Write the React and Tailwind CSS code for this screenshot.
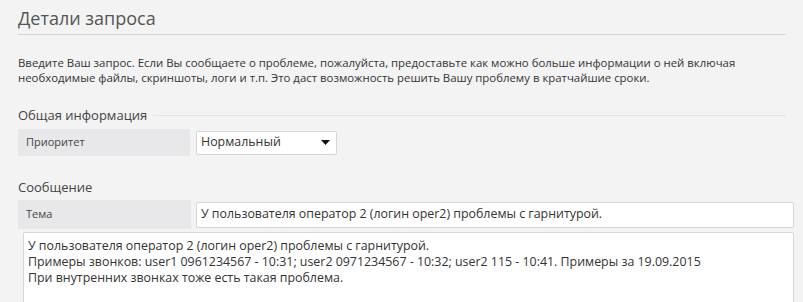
export default function App() {
  return (
    <div
      className="w-[803px] h-[302px] overflow-hidden bg-[#f3f3f3] text-[#333]"
      style={{ fontFamily: '"Open Sans", "Noto Sans", sans-serif' }}
    >
      <div className="pl-[18px] pr-[17px] pt-[5px]">
        <h1 className="text-[18px] leading-[26px] text-[#555] pb-[3px] border-b border-[#d4d4d4]">
          Детали запроса
        </h1>
        <p className="mt-[20px] text-[11.4px] leading-[15px] text-[#333]">
          Введите Ваш запрос. Если Вы сообщаете о проблеме, пожалуйста, предоставьте как можно больше информации о ней включая необходимые файлы, скриншоты, логи и т.п. Это даст возможность решить Вашу проблему в кратчайшие сроки.
        </p>

        <div className="mt-[21px] flex items-center gap-[6px]">
          <span className="text-[13px] leading-[18px] text-[#444]">Общая информация</span>
          <div className="flex-1 border-t border-[#e2e2e2]" />
        </div>
        <div className="mt-[5px] flex items-center gap-[6px]">
          <div className="w-[172px] h-[27px] bg-[#e8e8ea] pl-[8px] flex items-center text-[11px] text-[#444]">
            Приоритет
          </div>
          <div className="w-[141px] h-[24px] bg-white border border-[#d6d6d6] rounded-[2px] flex items-center justify-between pl-[4px] pr-[6px]">
            <span className="text-[12.4px] text-[#333]">Нормальный</span>
            <svg width="9" height="5" viewBox="0 0 9 5">
              <path d="M0 0h9L4.5 5z" fill="#111" />
            </svg>
          </div>
        </div>

        <div className="mt-[22px] text-[13px] leading-[18px] text-[#444]">Сообщение</div>
        <div className="mt-[4px] flex items-center gap-[5px]">
          <div className="w-[173px] h-[29px] bg-[#e8e8ea] pl-[8px] flex items-center text-[11px] text-[#444]">
            Тема
          </div>
          <div className="flex-1 h-[26px] bg-white border border-[#d6d6d6] rounded-[2px] flex items-center px-[4px] text-[12.4px] text-[#333] mr-[-8px]">
            У пользователя оператор 2 (логин oper2) проблемы с гарнитурой.
          </div>
        </div>
        <div className="mt-[3px] ml-[5px] mr-[-8px] h-[90px] bg-white border border-[#d6d6d6] rounded-[2px] px-[4px] pt-[5px] text-[12.4px] leading-[16px] text-[#333]">
          <div>У пользователя оператор 2 (логин oper2) проблемы с гарнитурой.</div>
          <div>Примеры звонков: user1 0961234567 - 10:31; user2 0971234567 - 10:32; user2 115 - 10:41. Примеры за 19.09.2015</div>
          <div>При внутренних звонках тоже есть такая проблема.</div>
        </div>
      </div>
    </div>
  );
}
